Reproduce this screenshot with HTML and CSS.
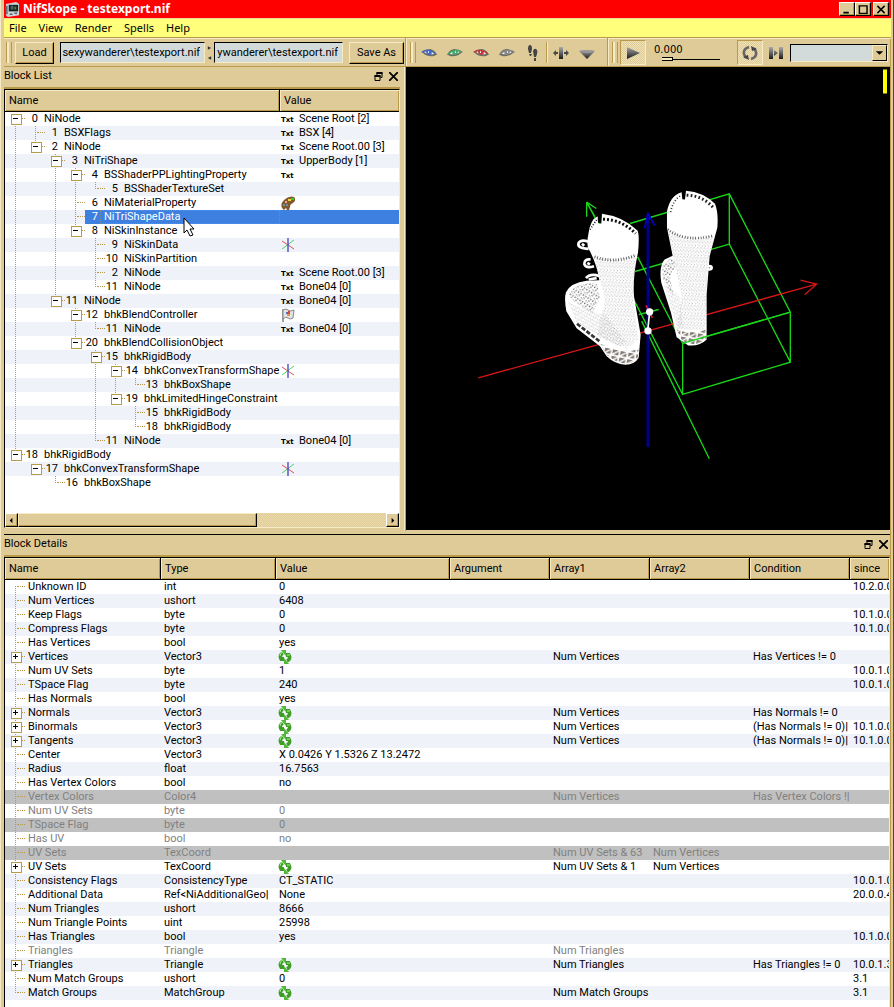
FILE: index.html
```html
<!DOCTYPE html>
<html lang="en">
<head>
<meta charset="utf-8">
<title>NifSkope - testexport.nif</title>
<link rel="stylesheet" href="styles.css">
</head>
<body>
<svg class="defs" aria-hidden="true">
  <symbol id="array" viewBox="0 0 14 14"><path d="M3 9Q1 5 5 3" fill="none" stroke="#3f9c25" stroke-width="3.4"/><path d="M3 0H8V6Z" fill="#52b738"/><path d="M1 7 6 7 6 11 2 11Z" fill="#3f9c25"/><path d="M11 5Q13 9 9 11" fill="none" stroke="#3f9c25" stroke-width="3.4"/><path d="M11 14H6V8Z" fill="#52b738"/><path d="M8 3H12L13 7H8Z" fill="#3f9c25"/><path d="M2 6Q2 3 5 2M9 5h3" fill="none" stroke="#a9ee92"/></symbol>
  <symbol id="axes" viewBox="0 0 14 14"><path d="M1 3 13 11" stroke="#e05050"/><path d="M13 2 1 11" stroke="#50d060"/><path d="M7 0V14" stroke="#4040c0" stroke-width="1.3"/></symbol>
  <symbol id="palette" viewBox="0 0 14 14"><path d="M1 12Q-1 8 3 4 8-1 13 1 16 4 12 7 9 8 9 11L8 14H6L5 12 3 14Z" fill="#80592e"/><path d="M10 2h3v2h-3z" fill="#28d030"/><path d="M7 3h3v2H7z" fill="#f3d735"/><path d="M4 5h2v2H4z" fill="#f4a29b"/><path d="M2 8h2v2H2zM5 8h2v2H5z" fill="#6d8fa2"/></symbol>
  <symbol id="flag" viewBox="0 0 14 14"><path d="M2 1V14" stroke="#777" stroke-width="1.4"/><path d="M2 2Q5 0 7 2T13 2L12 10Q9 12 7 10T2 11Z" fill="#e3e3e3" stroke="#888"/><path d="M5 4h2v2H5z" fill="#5270c0"/><path d="M7 3h2v3H7z" fill="#d94840"/><path d="M6 6h3v2H6z" fill="#d8a036"/></symbol>
  <symbol id="eye" viewBox="0 0 16 10"><path d="M0 4Q4 1 9 1 14 2 16 7 14 7 13 8 6 9 2 5Z" fill="#6a6c66"/><path d="M3 4Q7 2 12 4L13 6Q7 7 3 4Z" fill="#f2f4f0"/><path d="M5 2H10Q12 6 9 7 6 7 5 4Z" fill="currentColor"/><path d="M7 3h1v2H7z" fill="#e4ecff"/><path d="M1 4Q7 0 15 6" fill="none" stroke="currentColor" stroke-width="1.2"/></symbol>
  <symbol id="restore" viewBox="0 0 8 9"><path d="M2.5 3V.5h5v5H6M.5 3.5h5v5h-5z" fill="none" stroke="#000"/><path d="M2 1h6M0 4h6" stroke="#000" stroke-width="2"/></symbol>
  <symbol id="close" viewBox="0 0 8 8"><path d="M0 0 8 8M8 0 0 8" stroke="#000" stroke-width="1.6"/></symbol>
</svg>

<div class="window">
<header class="titlebar">
  <svg class="logo" viewBox="0 0 16 16"><path d="M1 2 12 0 15 2V14L3 16 1 14Z" fill="#ccd5da"/><path d="M4 3H14V10H4Z" fill="#17211e"/><path d="M6 4h3v4H6z" fill="#53616c"/><path d="M10 5h2v3h-2z" fill="#3b8c47"/><path d="M2 4v9M5 13h3M10 12h3" stroke="#56616a" stroke-width="1.5"/></svg>
  <h1>NifSkope - testexport.nif</h1>
  <div class="winbtns">
    <button aria-label="Minimize"><svg viewBox="0 0 10 10"><path d="M1 8.5H7" stroke="#000" stroke-width="2"/></svg></button><button aria-label="Maximize"><svg viewBox="0 0 10 10"><path d="M1 .5V9.5H9.5V.5M0 1H10" fill="none" stroke="#000" stroke-width="1.6"/></svg></button><button class="last" aria-label="Close"><svg viewBox="0 0 10 10"><path d="M1 1 9 9M9 1 1 9" stroke="#000" stroke-width="1.7"/></svg></button>
  </div>
</header>
<nav class="menubar"><button>File</button><button>View</button><button>Render</button><button>Spells</button><button>Help</button></nav>

<div class="toolbars">
  <div class="bar files">
    <i class="grip"></i><button class="push">Load</button>
    <input class="path wide" aria-label="Load path" value="sexywanderer\testexport.nif">
    <svg class="swap" viewBox="0 0 6 16"><path d="M1 0 5 2 1 4ZM5 12 1 14 5 16Z" fill="#333"/></svg>
    <input class="path" aria-label="Save path" value="ywanderer\testexport.nif">
    <button class="push save">Save As</button>
  </div>
  <div class="bar view">
    <i class="grip"></i>
    <button class="tool blue" aria-label="View front"><svg class="eye"><use href="#eye"/></svg></button>
    <button class="tool green" aria-label="View side"><svg class="eye flip"><use href="#eye"/></svg></button>
    <button class="tool red" aria-label="View top"><svg class="eye"><use href="#eye"/></svg></button>
    <button class="tool grey" aria-label="View user"><svg class="eye flip"><use href="#eye"/></svg></button>
    <button class="tool" aria-label="Walk"><svg class="ic" viewBox="0 0 16 16"><g fill="#444"><path d="M3 4Q3 0 5 0T7 4L6 8H4ZM4 9h3l-1 2H5ZM8 6Q9 3 11 4T12 9L11 12H9ZM9 13h2v3H9Z"/></g></svg></button>
    <i class="sep"></i>
    <button class="tool" aria-label="Flip"><svg class="ic" viewBox="0 0 16 16"><path d="M6 2h4v12H6z" fill="url(#metal)"/><path d="M5 7H3V5L0 8l3 3V9h2ZM11 7h2V5l3 3-3 3V9h-2Z" fill="#484848"/></svg></button>
    <button class="tool" aria-label="Perspective"><svg class="ic" viewBox="0 0 16 16"><path d="M0 6Q8 4 16 6L8 14Z" fill="url(#metal)"/><path d="M0 6Q8 4 16 6 8 10 0 6Z" fill="#999"/></svg></button>
  </div>
  <div class="bar anim">
    <i class="grip"></i>
    <button class="toggle" aria-label="Play"><svg class="ic" viewBox="0 0 16 16"><path d="M2 2 15 8 2 14Z" fill="url(#metal)"/></svg></button>
    <label class="time"><span>0.000</span><input type="range" min="0" max="100" value="0"></label>
    <button class="toggle" aria-label="Loop"><svg class="ic" viewBox="0 0 16 16"><path d="M7 2Q1 4 2 9L4 13M9 14Q15 12 14 7L12 3" fill="none" stroke="#666" stroke-width="2.6"/><path d="M1 12 7 15 6 10ZM15 4 9 1 10 6Z" fill="#444"/></svg></button>
    <button class="tool" aria-label="Switch animation"><svg class="ic" viewBox="0 0 16 16"><path d="M1 2h4v12H1zM11 2h4v12h-4zM6 5l4 3-4 3Z" fill="url(#metal)"/></svg></button>
    <span class="combo"><select aria-label="Animation group"><option></option></select><svg viewBox="0 0 14 14"><path d="M3 5H11L7 9Z"/></svg></span>
  </div>
</div>

<main class="workspace">
<section class="dock">
  <div class="docktitle"><h2>Block List</h2><button aria-label="Float Block List"><svg><use href="#restore"/></svg></button><button aria-label="Close Block List"><svg><use href="#close"/></svg></button></div>
  <div class="sunken">
  <table class="tree">
  <colgroup><col class="tname"><col></colgroup>
  <thead><tr><th>Name</th><th>Value</th></tr></thead>
  <tbody>
  <tr><td><div><button class="g d m" aria-label="Collapse"></button><b>0</b><span>NiNode</span></div></td><td><em>Txt</em>Scene Root [2]</td></tr>
  <tr><td><div><i class="g v"></i><i class="g v h"></i><b>1</b><span>BSXFlags</span></div></td><td><em>Txt</em>BSX [4]</td></tr>
  <tr><td><div><i class="g v"></i><button class="g e m" aria-label="Collapse"></button><b>2</b><span>NiNode</span></div></td><td><em>Txt</em>Scene Root.00 [3]</td></tr>
  <tr><td><div><i class="g v"></i><i class="g"></i><button class="g v m" aria-label="Collapse"></button><b>3</b><span>NiTriShape</span></div></td><td><em>Txt</em>UpperBody [1]</td></tr>
  <tr><td><div><i class="g v"></i><i class="g"></i><i class="g v"></i><button class="g v m" aria-label="Collapse"></button><b>4</b><span>BSShaderPPLightingProperty</span></div></td><td><em>Txt</em></td></tr>
  <tr><td><div><i class="g v"></i><i class="g"></i><i class="g v"></i><i class="g v"></i><i class="g e h"></i><b>5</b><span>BSShaderTextureSet</span></div></td><td></td></tr>
  <tr><td><div><i class="g v"></i><i class="g"></i><i class="g v"></i><i class="g v h"></i><b>6</b><span>NiMaterialProperty</span></div></td><td><svg><use href="#palette"/></svg></td></tr>
  <tr class="sel"><td><div><i class="g v"></i><i class="g"></i><i class="g v"></i><i class="g v h"></i><b>7</b><span>NiTriShapeData</span><svg class="cursor" viewBox="0 0 12 20"><path d="M1 1V16L4 13 7 19 10 18 7 12H11Z" fill="#fff" stroke="#000"/></svg></div></td><td></td></tr>
  <tr><td><div><i class="g v"></i><i class="g"></i><i class="g v"></i><button class="g e m" aria-label="Collapse"></button><b>8</b><span>NiSkinInstance</span></div></td><td></td></tr>
  <tr><td><div><i class="g v"></i><i class="g"></i><i class="g v"></i><i class="g"></i><i class="g v h"></i><b>9</b><span>NiSkinData</span></div></td><td><svg><use href="#axes"/></svg></td></tr>
  <tr><td><div><i class="g v"></i><i class="g"></i><i class="g v"></i><i class="g"></i><i class="g v h"></i><b>10</b><span>NiSkinPartition</span></div></td><td></td></tr>
  <tr><td><div><i class="g v"></i><i class="g"></i><i class="g v"></i><i class="g"></i><i class="g v h"></i><b>2</b><span>NiNode</span></div></td><td><em>Txt</em>Scene Root.00 [3]</td></tr>
  <tr><td><div><i class="g v"></i><i class="g"></i><i class="g v"></i><i class="g"></i><i class="g e h"></i><b>11</b><span>NiNode</span></div></td><td><em>Txt</em>Bone04 [0]</td></tr>
  <tr><td><div><i class="g v"></i><i class="g"></i><button class="g e m" aria-label="Collapse"></button><b>11</b><span>NiNode</span></div></td><td><em>Txt</em>Bone04 [0]</td></tr>
  <tr><td><div><i class="g v"></i><i class="g"></i><i class="g"></i><button class="g v m" aria-label="Collapse"></button><b>12</b><span>bhkBlendController</span></div></td><td><svg><use href="#flag"/></svg></td></tr>
  <tr><td><div><i class="g v"></i><i class="g"></i><i class="g"></i><i class="g v"></i><i class="g e h"></i><b>11</b><span>NiNode</span></div></td><td><em>Txt</em>Bone04 [0]</td></tr>
  <tr><td><div><i class="g v"></i><i class="g"></i><i class="g"></i><button class="g e m" aria-label="Collapse"></button><b>20</b><span>bhkBlendCollisionObject</span></div></td><td></td></tr>
  <tr><td><div><i class="g v"></i><i class="g"></i><i class="g"></i><i class="g"></i><button class="g v m" aria-label="Collapse"></button><b>15</b><span>bhkRigidBody</span></div></td><td></td></tr>
  <tr><td><div><i class="g v"></i><i class="g"></i><i class="g"></i><i class="g"></i><i class="g v"></i><button class="g v m" aria-label="Collapse"></button><b>14</b><span>bhkConvexTransformShape</span></div></td><td><svg><use href="#axes"/></svg></td></tr>
  <tr><td><div><i class="g v"></i><i class="g"></i><i class="g"></i><i class="g"></i><i class="g v"></i><i class="g v"></i><i class="g e h"></i><b>13</b><span>bhkBoxShape</span></div></td><td></td></tr>
  <tr><td><div><i class="g v"></i><i class="g"></i><i class="g"></i><i class="g"></i><i class="g v"></i><button class="g e m" aria-label="Collapse"></button><b>19</b><span>bhkLimitedHingeConstraint</span></div></td><td></td></tr>
  <tr><td><div><i class="g v"></i><i class="g"></i><i class="g"></i><i class="g"></i><i class="g v"></i><i class="g"></i><i class="g v h"></i><b>15</b><span>bhkRigidBody</span></div></td><td></td></tr>
  <tr><td><div><i class="g v"></i><i class="g"></i><i class="g"></i><i class="g"></i><i class="g v"></i><i class="g"></i><i class="g e h"></i><b>18</b><span>bhkRigidBody</span></div></td><td></td></tr>
  <tr><td><div><i class="g v"></i><i class="g"></i><i class="g"></i><i class="g"></i><i class="g e h"></i><b>11</b><span>NiNode</span></div></td><td><em>Txt</em>Bone04 [0]</td></tr>
  <tr><td><div><button class="g e m" aria-label="Collapse"></button><b>18</b><span>bhkRigidBody</span></div></td><td></td></tr>
  <tr><td><div><i class="g"></i><button class="g m" aria-label="Collapse"></button><b>17</b><span>bhkConvexTransformShape</span></div></td><td><svg><use href="#axes"/></svg></td></tr>
  <tr><td><div><i class="g"></i><i class="g"></i><i class="g e h"></i><b>16</b><span>bhkBoxShape</span></div></td><td></td></tr>
  </tbody>
  </table>
  <div class="hscroll"><button aria-label="Scroll left"><svg viewBox="0 0 10 10"><path d="M6 2V8L3 5Z"/></svg></button><div class="track"><div class="thumb"></div></div><button aria-label="Scroll right"><svg viewBox="0 0 10 10"><path d="M4 2V8L7 5Z"/></svg></button></div>
  </div>
</section>

<section class="viewport" aria-label="3D view">
<svg viewBox="0 0 484 462">
  <defs>
    <linearGradient id="metal" x1="0" y1="0" x2="0" y2="1"><stop offset="0" stop-color="#aaa"/><stop offset="1" stop-color="#1a1a1a"/></linearGradient>
    <pattern id="mesh" width="10" height="29" patternUnits="userSpaceOnUse" patternTransform="rotate(3)"><path d="M2 1v3M7 5v3M2 11v2M6 15v3M3 21v3M8 25v2" stroke="#555" stroke-width="1.5"/></pattern>
    <pattern id="fine" width="11" height="17" patternUnits="userSpaceOnUse" patternTransform="rotate(-28)"><path d="M2 1v3M6 6v3M9 12v3M3 11v2" stroke="#666" stroke-width="1.4"/></pattern>
    <pattern id="toe" width="17" height="19" patternUnits="userSpaceOnUse" patternTransform="rotate(32)"><path d="M2 2 7 1 5 6ZM9 9 13 7 12 12ZM2 12h3v2H2ZM12 1h3v3h-3ZM7 15l3-1-1 3Z" fill="#222"/></pattern>
    <pattern id="sole" width="24" height="20" patternUnits="userSpaceOnUse" patternTransform="rotate(12)"><path d="M3 3H20L3 16ZM22 6V18H8Z" fill="#837b73"/></pattern>
  </defs>
  <path d="M477 2H481V26H477Z" fill="#ff0"/>
  <g transform="translate(54 112) scale(.3333)" fill="none">
    <g stroke="#19d619" stroke-width="4">
      <path d="M510 132 808 43 991 398 668 492 M668 492V645L991 548V398M808 43V194L991 548M808 194 525 276M533 232 668 492M522 362 668 645M545 425 748 838"/>
      <path d="M440 180 380 68V112M380 68 409 87M380 68 405 112"/>
    </g>
    <path d="M55 595 1070 314M1022 302 1070 314 1034 346" stroke="#d61616" stroke-width="4"/>
    <path d="M564 803V102" stroke="#000088" stroke-width="9"/><path d="M554 146 564 102 584 138" stroke="#0000cc" stroke-width="5"/>
    <path d="M537 405 596 390" stroke="#19d619" stroke-width="4"/><path d="M558 378 577 415" stroke="#d61640" stroke-width="5"/><path d="M569 397 563 455" stroke="#fff" stroke-width="5"/><circle cx="569" cy="397" r="11" fill="#fff"/><circle cx="564" cy="454" r="11" fill="#fff"/>

    <g stroke="#fff" stroke-width="8"><path d="M386 187Q364 178 356 190 350 207 386 208M366 193l7 6"/><path d="M392 240Q372 238 373 254 378 268 402 260M382 250l8 5"/><path d="M378 296Q390 280 420 290M386 300 410 296"/><ellipse cx="748" cy="265" rx="7" ry="5"/></g>
    <path d="M385 165Q390 120 413 110L414 131 424 132 426 103Q490 111 533 154 539 170 534 220 518 290 522 350L542 466 536 535Q525 555 496 556 465 554 440 530L420 500 350 446 319 395Q312 357 318 338 332 310 380 304L418 302Q410 250 384 205Q380 185 385 165Z" fill="#fff"/>
    <path d="M402 229Q460 250 528 225L519 350 534 480 500 508 410 470 435 360Z" fill="url(#mesh)"/>
    <path d="M404 232Q460 253 525 228" stroke="#333" stroke-width="9" stroke-dasharray="2 6"/>
    <path d="M325 345Q345 310 410 310L421 355 397 400 345 370Z" fill="url(#toe)"/>
    <path d="M326 370 440 410 500 490 475 500 350 430Z" fill="url(#fine)"/>
    <path d="M421 493Q475 522 536 510L533 540Q500 562 465 543L438 525Z" fill="url(#sole)"/>
    <path d="M351 433 418 485" stroke="#333" stroke-width="8" stroke-dasharray="13 5"/>
    <path d="M429 119Q485 120 527 162" stroke="#111" stroke-width="9" stroke-dasharray="6 6"/><path d="M390 150 410 121" stroke="#222" stroke-width="5" stroke-dasharray="3 5"/>

    <path d="M621 96Q630 48 665 38L667 59 675 60 678 34Q730 38 765 73 776 100 772 145L749 230 740 345 740 480Q720 501 685 498L650 473 633 400 604 310Q596 260 614 240L638 229 621 145Z" fill="#fff"/>
    <path d="M622 145Q675 192 764 165L743 260 735 450 650 450 665 350 638 225Z" fill="url(#mesh)"/>
    <path d="M624 150Q675 190 762 168" stroke="#333" stroke-width="8" stroke-dasharray="2 6"/>
    <path d="M607 260 633 235 650 255 630 290 640 350 609 300Z" fill="url(#toe)"/>
    <path d="M611 310 660 350 670 445 650 440Z" fill="url(#fine)"/>
    <path d="M650 450Q690 467 740 450V482Q700 505 667 484Z" fill="url(#sole)"/>
    <path d="M680 47Q730 48 763 88" stroke="#222" stroke-width="9" stroke-dasharray="5 7"/><path d="M632 98Q638 64 660 50" stroke="#333" stroke-width="5" stroke-dasharray="3 6"/>
    <path d="M668 492 991 398" stroke="#19d619" stroke-width="4"/>
  </g>
</svg>
</section>
</main>

<section class="dock details">
  <div class="docktitle"><h2>Block Details</h2><button aria-label="Float Block Details"><svg><use href="#restore"/></svg></button><button aria-label="Close Block Details"><svg><use href="#close"/></svg></button></div>
  <div class="sunken">
  <table class="props">
  <colgroup><col class="c1"><col class="c2"><col class="c3"><col class="c4"><col class="c4"><col class="c4"><col class="c4"><col></colgroup>
  <thead><tr><th>Name</th><th>Type</th><th>Value</th><th>Argument</th><th>Array1</th><th>Array2</th><th>Condition</th><th>since</th></tr></thead>
  <tbody>
  <tr><td><i class="g d h"></i>Unknown ID</td><td>int</td><td>0</td><td></td><td></td><td></td><td></td><td>10.2.0.0</td></tr>
  <tr><td><i class="g v h"></i>Num Vertices</td><td>ushort</td><td>6408</td><td></td><td></td><td></td><td></td><td></td></tr>
  <tr><td><i class="g v h"></i>Keep Flags</td><td>byte</td><td>0</td><td></td><td></td><td></td><td></td><td>10.1.0.0</td></tr>
  <tr><td><i class="g v h"></i>Compress Flags</td><td>byte</td><td>0</td><td></td><td></td><td></td><td></td><td>10.1.0.0</td></tr>
  <tr><td><i class="g v h"></i>Has Vertices</td><td>bool</td><td>yes</td><td></td><td></td><td></td><td></td><td></td></tr>
  <tr><td><button class="g v m p" aria-label="Expand"></button>Vertices</td><td>Vector3</td><td><svg><use href="#array"/></svg></td><td></td><td>Num Vertices</td><td></td><td>Has Vertices != 0</td><td></td></tr>
  <tr><td><i class="g v h"></i>Num UV Sets</td><td>byte</td><td>1</td><td></td><td></td><td></td><td></td><td>10.0.1.0</td></tr>
  <tr><td><i class="g v h"></i>TSpace Flag</td><td>byte</td><td>240</td><td></td><td></td><td></td><td></td><td>10.0.1.0</td></tr>
  <tr><td><i class="g v h"></i>Has Normals</td><td>bool</td><td>yes</td><td></td><td></td><td></td><td></td><td></td></tr>
  <tr><td><button class="g v m p" aria-label="Expand"></button>Normals</td><td>Vector3</td><td><svg><use href="#array"/></svg></td><td></td><td>Num Vertices</td><td></td><td>Has Normals != 0</td><td></td></tr>
  <tr><td><button class="g v m p" aria-label="Expand"></button>Binormals</td><td>Vector3</td><td><svg><use href="#array"/></svg></td><td></td><td>Num Vertices</td><td></td><td>(Has Normals != 0)<strong>|</strong></td><td>10.1.0.0</td></tr>
  <tr><td><button class="g v m p" aria-label="Expand"></button>Tangents</td><td>Vector3</td><td><svg><use href="#array"/></svg></td><td></td><td>Num Vertices</td><td></td><td>(Has Normals != 0)<strong>|</strong></td><td>10.1.0.0</td></tr>
  <tr><td><i class="g v h"></i>Center</td><td>Vector3</td><td>X 0.0426 Y 1.5326 Z 13.2472</td><td></td><td></td><td></td><td></td><td></td></tr>
  <tr><td><i class="g v h"></i>Radius</td><td>float</td><td>16.7563</td><td></td><td></td><td></td><td></td><td></td></tr>
  <tr><td><i class="g v h"></i>Has Vertex Colors</td><td>bool</td><td>no</td><td></td><td></td><td></td><td></td><td></td></tr>
  <tr class="off band"><td><i class="g v h"></i>Vertex Colors</td><td>Color4</td><td></td><td></td><td>Num Vertices</td><td></td><td>Has Vertex Colors !<strong>|</strong></td><td></td></tr>
  <tr class="off"><td><i class="g v h"></i>Num UV Sets</td><td>byte</td><td>0</td><td></td><td></td><td></td><td></td><td></td></tr>
  <tr class="off band"><td><i class="g v h"></i>TSpace Flag</td><td>byte</td><td>0</td><td></td><td></td><td></td><td></td><td></td></tr>
  <tr class="off"><td><i class="g v h"></i>Has UV</td><td>bool</td><td>no</td><td></td><td></td><td></td><td></td><td></td></tr>
  <tr class="off band"><td><i class="g v h"></i>UV Sets</td><td>TexCoord</td><td></td><td></td><td>Num UV Sets &amp; 63</td><td>Num Vertices</td><td></td><td></td></tr>
  <tr><td><button class="g v m p" aria-label="Expand"></button>UV Sets</td><td>TexCoord</td><td><svg><use href="#array"/></svg></td><td></td><td>Num UV Sets &amp; 1</td><td>Num Vertices</td><td></td><td></td></tr>
  <tr><td><i class="g v h"></i>Consistency Flags</td><td>ConsistencyType</td><td>CT_STATIC</td><td></td><td></td><td></td><td></td><td>10.0.1.0</td></tr>
  <tr><td><i class="g v h"></i>Additional Data</td><td>Ref&lt;NiAdditionalGeo<strong>|</strong></td><td>None</td><td></td><td></td><td></td><td></td><td>20.0.0.4</td></tr>
  <tr><td><i class="g v h"></i>Num Triangles</td><td>ushort</td><td>8666</td><td></td><td></td><td></td><td></td><td></td></tr>
  <tr><td><i class="g v h"></i>Num Triangle Points</td><td>uint</td><td>25998</td><td></td><td></td><td></td><td></td><td></td></tr>
  <tr><td><i class="g v h"></i>Has Triangles</td><td>bool</td><td>yes</td><td></td><td></td><td></td><td></td><td>10.1.0.0</td></tr>
  <tr class="off"><td><i class="g v h"></i>Triangles</td><td>Triangle</td><td></td><td></td><td>Num Triangles</td><td></td><td></td><td></td></tr>
  <tr><td><button class="g v m p" aria-label="Expand"></button>Triangles</td><td>Triangle</td><td><svg><use href="#array"/></svg></td><td></td><td>Num Triangles</td><td></td><td>Has Triangles != 0</td><td>10.0.1.3</td></tr>
  <tr><td><i class="g v h"></i>Num Match Groups</td><td>ushort</td><td>0</td><td></td><td></td><td></td><td></td><td>3.1</td></tr>
  <tr><td><i class="g e h"></i>Match Groups</td><td>MatchGroup</td><td><svg><use href="#array"/></svg></td><td></td><td>Num Match Groups</td><td></td><td></td><td>3.1</td></tr>
  </tbody>
  </table>
  </div>
</section>
</div>
</body>
</html>
```
FILE: styles.css
```css
:root {
  --face: #dfcb98;
  --light: #f6ebc4;
  --shade: #b89a4a;
  --field: #d3dbda;
}
* { box-sizing: border-box; }
body, h1, h2 { margin: 0; }
body, button, input, select { font: 11px/14px Roboto, "Liberation Sans", sans-serif; color: #000; }
button { padding: 0; border: 0; background: none; }
.defs { position: absolute; width: 0; height: 0; }

.window {
  display: flex;
  flex-direction: column;
  min-height: 100vh;
  padding-left: 4px;
  background: var(--face);
  border-right: 1px solid #5a4420;
  box-shadow: inset 1px 0 var(--light), inset -2px 0 var(--face), inset -3px 0 var(--shade);
}

.titlebar { display: flex; align-items: center; height: 18px; margin-right: 2px; padding: 0 2px 0 1px; background: #f00; color: #fff; }
.titlebar h1 { flex: 1; margin-left: 3px; font: bold 12px/18px "Noto Sans", sans-serif; }
.logo { width: 15px; height: 15px; }
.winbtns { display: flex; }
.winbtns button, .hscroll button {
  display: grid;
  place-items: center;
  width: 16px;
  height: 14px;
  background: var(--face);
  border: 1px solid;
  border-color: #fff #000 #000 #fff;
  box-shadow: inset -1px -1px var(--shade);
}
.winbtns svg { width: 10px; height: 9px; }
.winbtns .last { margin-left: 2px; }

.menubar { display: flex; gap: 12px; height: 20px; margin-right: 2px; padding: 0 5px; background: #ffff7c; border-top: 1px solid #f0d890; border-bottom: 1px solid var(--shade); }
.menubar button { font-family: "Noto Sans", sans-serif; }

.toolbars { display: flex; height: 29px; margin-right: 2px; border-bottom: 1px solid var(--shade); }
.bar { display: flex; align-items: center; min-width: 0; border-top: 1px solid var(--light); }
.bar + .bar { border-left: 1px solid var(--light); box-shadow: -1px 0 var(--shade); }
.files { flex: 0 1 402px; padding-left: 2px; padding-right: 2px; }
.view { flex: none; width: 202px; padding-left: 3px; }
.anim { flex: 1; padding-left: 3px; }
.grip { flex: none; width: 6px; height: 21px; border: 1px solid var(--shade); border-width: 0 1px; box-shadow: inset 2px 0 var(--light), inset -2px 0 var(--face); }
.push { flex: none; width: 39px; height: 22px; margin-left: 3px; border: 1px solid; border-color: var(--light) #000 #000 var(--light); box-shadow: inset -1px -1px var(--shade); }
.push.save { width: 55px; margin-left: 6px; }
.path { flex: 128 1 0; width: 0; min-width: 0; height: 21px; padding: 0 4px 0 0; background: var(--field); border: 1px solid; border-color: #000 var(--light) var(--light) #000; border-radius: 0; direction: rtl; text-align: right; }
.path.wide { flex-grow: 145; margin-left: 6px; }
.swap { flex: none; width: 5px; height: 16px; margin: 0 2px; }
.tool { display: grid; place-items: center; flex: none; width: 26px; height: 24px; }
.ic { width: 16px; height: 16px; }
.eye { width: 16px; height: 10px; }
.flip { transform: scaleX(-1); }
.blue { color: #4266c8; }
.green { color: #3dae68; }
.red { color: #c93636; }
.grey { color: #888; }
.sep { width: 2px; height: 21px; background: var(--shade); border-right: 1px solid var(--light); }
.toggle { display: grid; place-items: center; flex: none; width: 26px; height: 25px; margin-left: 2px; border: 1px solid; border-color: var(--shade) var(--light) var(--light) var(--shade); background: repeating-conic-gradient(#f0e2b6 0 25%, #dfcb98 0 50%) 0 0 / 2px 2px; }
.time { display: flex; flex-direction: column; flex: none; width: 89px; padding-left: 8px; }
.time span { font: 10px/12px "DejaVu Sans", sans-serif; }
.time input { width: 58px; height: 5px; margin: 1px 0 0 8px; appearance: none; background: linear-gradient(#000 0 0) 0 2px / 100% 1px no-repeat; }
.time input::-webkit-slider-thumb { appearance: none; width: 11px; height: 4px; background: var(--light); border: 1px solid #000; border-width: 1px 1px 1px 0; }
.combo { position: relative; flex: 1; min-width: 0; margin: 0 3px 0 1px; }
.combo select { display: block; width: 100%; height: 18px; appearance: none; background: var(--field); border: 1px solid; border-color: #000 var(--light) var(--light) #000; border-radius: 0; }
.combo svg { position: absolute; right: 1px; top: 1px; width: 15px; height: 16px; background: var(--face); border: 1px solid; border-color: var(--light) #000 #000 var(--light); pointer-events: none; }

.workspace { display: grid; grid-template-columns: minmax(0, 402fr) minmax(0, 487fr); min-height: 464px; }
.viewport { background: #000; margin-right: 3px; margin-bottom: 1px; }
.viewport svg { display: block; width: 100%; height: 100%; }
.dock { display: flex; flex-direction: column; min-width: 0; }
.workspace .dock { padding-right: 6px; padding-bottom: 3px; box-shadow: inset -1px 0 var(--shade), inset -2px 0 var(--light); }
.docktitle { display: flex; gap: 6px; align-items: center; height: 22px; padding: 0 2px 2px 0; border-bottom: 2px solid var(--shade); }
.docktitle h2 { flex: 1; font: 11px/14px Roboto, sans-serif; }
.docktitle svg { display: block; width: 9px; height: 9px; }
.sunken { display: flex; flex: 1; flex-direction: column; min-width: 0; overflow: hidden; background: #fff; border: 1px solid; border-color: #000 var(--light) var(--light) #000; }

table { width: 100%; table-layout: fixed; border-collapse: separate; border-spacing: 0; }
th, td { padding: 0; font-weight: normal; text-align: left; white-space: nowrap; overflow: hidden; }
th { height: 22px; padding: 0 4px; background: var(--face); border-right: 1px solid #000; border-bottom: 1px solid #000; box-shadow: inset 1px 1px var(--light), inset -1px -1px var(--shade); }
th:last-child { border-right: 0; }
td { height: 14px; line-height: 14px; }
tbody tr:nth-child(even) { background: #eff3f9; }
td svg { display: block; width: 14px; height: 14px; }
.tname { width: 275px; }
.tree td:last-child { padding-left: 1px; }
.tree td > div { display: flex; height: 14px; }
.tree b { width: 15px; padding-right: 2px; font-weight: normal; text-align: right; }
.tree span { padding-left: 4px; }
.tree em { display: inline-block; width: 18px; font: bold 7px/12px "DejaVu Sans", sans-serif; }
.sel b, .sel td:last-child { background: #3d80df; color: #fff; }
.sel span { flex: 1; background: #3d80df; color: #fff; outline: 1px dotted #8a8a80; outline-offset: -1px; }
.sel td:first-child { overflow: visible; }
.sel div { position: relative; }
.cursor.cursor { position: absolute; left: 178px; top: 7px; width: 12px; height: 20px; z-index: 1; }

.g { display: block; position: relative; flex: none; width: 20px; height: 14px; background: repeating-linear-gradient(var(--shade) 0 1px, transparent 1px 2px) no-repeat 10px 0 / 0 0; }
.v { background-size: 1px 14px; }
.e { background-size: 1px 7px; }
.d { background-size: 1px 14px; background-position-y: 6px; }
.h::after, .m::after { content: ""; position: absolute; left: 12px; right: 0; top: 6px; border-top: 1px dotted var(--shade); }
.m::after { left: 16px; }
.m::before { content: ""; position: absolute; left: 6px; top: 2px; width: 9px; height: 9px; border: 1px solid var(--shade); background: linear-gradient(#000 0 0) 1px 3px / 5px 1px no-repeat #fff; }
.p::before { background: linear-gradient(#000 0 0) 1px 3px / 5px 1px no-repeat, linear-gradient(#000 0 0) 3px 1px / 1px 5px no-repeat #fff; }

.hscroll { display: flex; height: 14px; margin-top: auto; }
.hscroll button { width: 13px; }
.hscroll svg { width: 9px; height: 9px; }
.track { flex: 1; background: repeating-conic-gradient(#ecdcab 0 25%, #dfcb98 0 50%) 0 0 / 2px 2px; }
.thumb { width: 65%; height: 14px; background: var(--face); border: 1px solid; border-color: var(--light) #000 #000 var(--light); box-shadow: inset -1px -1px var(--shade); }

.details { flex: 1; margin-top: 3px; margin-right: 3px; border-top: 1px solid #000; }
.details .sunken { border-bottom: 0; }
.c1 { width: 156px; }
.c2 { width: 115px; }
.c3 { width: 174px; }
.c4 { width: 100px; }
.props td { padding-left: 3px; }
.props td:first-child { padding-left: 0; }
.props td .g { display: inline-block; margin-right: 3px; vertical-align: top; }
.props td svg { margin-left: -1px; }
.off td { color: #808080; }
.off.band td { background: #c0c0c0; }
```
